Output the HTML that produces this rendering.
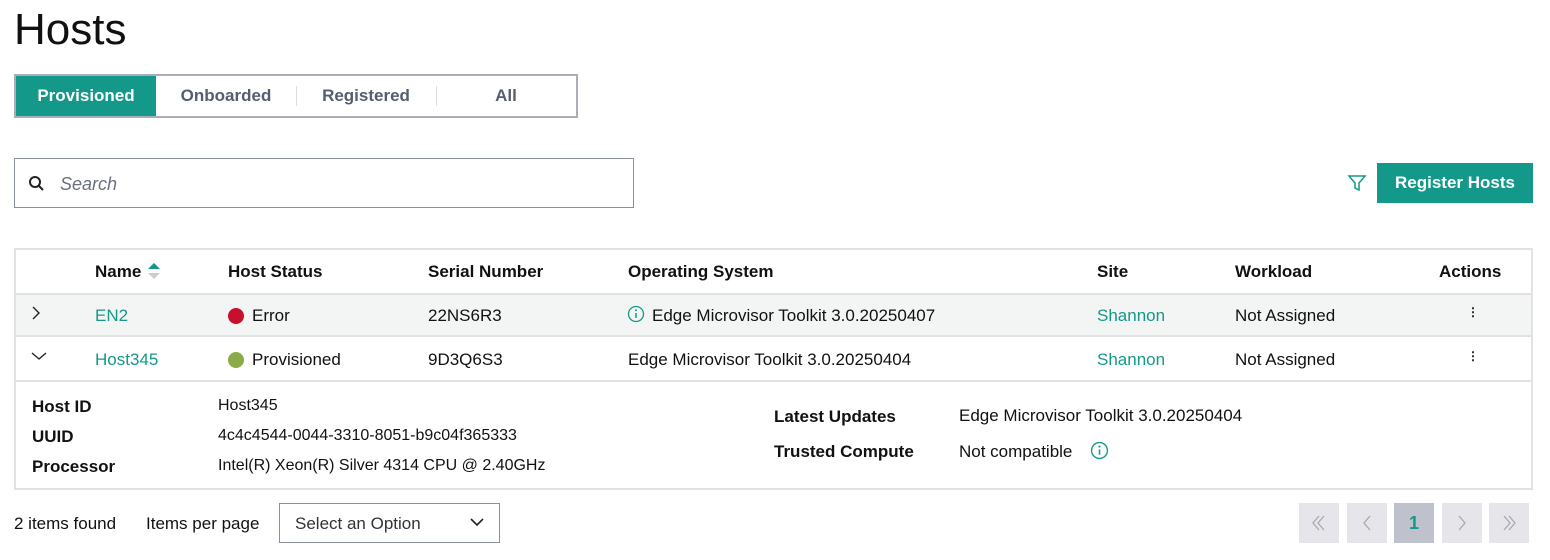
<!DOCTYPE html>
<html><head><style>
*{box-sizing:border-box;margin:0;padding:0}
body{width:1550px;height:560px;background:#fff;font-family:"Liberation Sans",sans-serif;color:#111;position:relative;overflow:hidden;font-size:17px}
.a{position:absolute;white-space:nowrap}
.t{color:#14988a}
.b{font-weight:bold}
.g{color:#555d6e}
.p{position:absolute;top:503px;width:40px;height:40px;background:#e5e5ea}
.p svg{position:absolute;left:10px;top:10px}
</style></head><body>
<div class="a" style="left:14px;top:4px;font-size:44px;line-height:52px">Hosts</div>

<div class="a" style="left:14px;top:74px;width:564px;height:44px;border:2px solid #a9adb8"></div>
<div class="a" style="left:16px;top:76px;width:140px;height:40px;background:#14988a;color:#fff;font-weight:bold;text-align:center;line-height:40px">Provisioned</div>
<div class="a b g" style="left:156px;top:76px;width:140px;line-height:40px;text-align:center">Onboarded</div>
<div class="a" style="left:296px;top:86px;width:1px;height:20px;background:#ddd"></div>
<div class="a b g" style="left:296px;top:76px;width:140px;line-height:40px;text-align:center">Registered</div>
<div class="a" style="left:436px;top:86px;width:1px;height:20px;background:#ddd"></div>
<div class="a b g" style="left:436px;top:76px;width:140px;line-height:40px;text-align:center">All</div>

<div class="a" style="left:14px;top:158px;width:620px;height:50px;border:1px solid #8a8f9c"></div>
<svg class="a" style="left:28px;top:175px" width="18" height="18" viewBox="0 0 18 18"><circle cx="7" cy="7" r="5" fill="none" stroke="#222" stroke-width="2"/><line x1="11" y1="11" x2="15" y2="15" stroke="#222" stroke-width="2"/></svg>
<div class="a g" style="left:60px;top:172px;line-height:24px;font-style:italic;font-size:18px;color:#6b7080">Search</div>

<svg class="a" style="left:1347px;top:173px" width="20" height="20" viewBox="0 0 20 20"><path d="M2 3H18L12 10V17L8 15V10Z" fill="none" stroke="#14988a" stroke-width="1.5"/></svg>
<div class="a" style="left:1377px;top:163px;width:156px;height:40px;background:#14988a;color:#fff;font-weight:bold;text-align:center;line-height:40px">Register Hosts</div>

<div class="a" style="left:14px;top:248px;width:1519px;height:242px;border:2px solid #e2e2e2"></div>
<div class="a" style="left:16px;top:293px;width:1515px;height:44px;background:#f3f4f4;border-top:2px solid #e2e2e2;border-bottom:2px solid #e2e2e2"></div>
<div class="a" style="left:16px;top:380px;width:1515px;height:2px;background:#e2e2e2"></div>

<div class="a b" style="left:95px;top:261px;line-height:22px">Name</div>
<svg class="a" style="left:146px;top:261px" width="16" height="20" viewBox="0 0 16 20"><path d="M2 8L8 2L14 8Z" fill="#14988a"/><path d="M2 12L8 18L14 12Z" fill="#ccc"/></svg>
<div class="a b" style="left:228px;top:261px;line-height:22px">Host Status</div>
<div class="a b" style="left:428px;top:261px;line-height:22px">Serial Number</div>
<div class="a b" style="left:628px;top:261px;line-height:22px">Operating System</div>
<div class="a b" style="left:1097px;top:261px;line-height:22px">Site</div>
<div class="a b" style="left:1235px;top:261px;line-height:22px">Workload</div>
<div class="a b" style="left:1439px;top:261px;line-height:22px">Actions</div>

<svg class="a" style="left:30px;top:306px" width="12" height="14" viewBox="0 0 12 14"><path d="M3 1L9 7L3 13" fill="none" stroke="#222" stroke-width="1.4"/></svg>
<div class="a t" style="left:95px;top:305px;line-height:22px">EN2</div>
<div class="a" style="left:228px;top:308px;width:16px;height:16px;border-radius:50%;background:#c8102e"></div>
<div class="a" style="left:252px;top:305px;line-height:22px">Error</div>
<div class="a" style="left:428px;top:305px;line-height:22px">22NS6R3</div>
<svg class="a" style="left:627px;top:305px" width="18" height="18" viewBox="0 0 18 18"><circle cx="9" cy="9" r="7.5" fill="none" stroke="#14988a" stroke-width="1.3"/><line x1="9" y1="8" x2="9" y2="13" stroke="#14988a" stroke-width="1.5"/><circle cx="9" cy="5.3" r="1" fill="#14988a"/></svg>
<div class="a" style="left:652px;top:305px;line-height:22px">Edge Microvisor Toolkit 3.0.20250407</div>
<div class="a t" style="left:1097px;top:305px;line-height:22px">Shannon</div>
<div class="a" style="left:1235px;top:305px;line-height:22px">Not Assigned</div>
<div class="a" style="left:1467px;top:304px;line-height:16px;font-size:12px;font-weight:bold">⋮</div>

<svg class="a" style="left:30px;top:350px" width="18" height="12" viewBox="0 0 18 12"><path d="M2 3L9 9L16 3" fill="none" stroke="#222" stroke-width="1.4"/></svg>
<div class="a t" style="left:95px;top:349px;line-height:22px">Host345</div>
<div class="a" style="left:228px;top:352px;width:16px;height:16px;border-radius:50%;background:#8aab47"></div>
<div class="a" style="left:252px;top:349px;line-height:22px">Provisioned</div>
<div class="a" style="left:428px;top:349px;line-height:22px">9D3Q6S3</div>
<div class="a" style="left:628px;top:349px;line-height:22px">Edge Microvisor Toolkit 3.0.20250404</div>
<div class="a t" style="left:1097px;top:349px;line-height:22px">Shannon</div>
<div class="a" style="left:1235px;top:349px;line-height:22px">Not Assigned</div>
<div class="a" style="left:1467px;top:348px;line-height:16px;font-size:12px;font-weight:bold">⋮</div>

<div class="a b" style="left:32px;top:396px;line-height:22px">Host ID</div>
<div class="a b" style="left:32px;top:426px;line-height:22px">UUID</div>
<div class="a b" style="left:32px;top:456px;line-height:22px">Processor</div>
<div class="a" style="left:218px;top:395px;line-height:22px;font-size:16px">Host345</div>
<div class="a" style="left:218px;top:425px;line-height:22px;font-size:16px">4c4c4544-0044-3310-8051-b9c04f365333</div>
<div class="a" style="left:218px;top:455px;line-height:22px;font-size:16px">Intel(R) Xeon(R) Silver 4314 CPU @ 2.40GHz</div>
<div class="a b" style="left:774px;top:406px;line-height:22px">Latest Updates</div>
<div class="a b" style="left:774px;top:441px;line-height:22px">Trusted Compute</div>
<div class="a" style="left:959px;top:405px;line-height:22px">Edge Microvisor Toolkit 3.0.20250404</div>
<div class="a" style="left:959px;top:441px;line-height:22px">Not compatible</div>
<svg class="a" style="left:1090px;top:441px" width="19" height="19" viewBox="0 0 18 18"><circle cx="9" cy="9" r="7.5" fill="none" stroke="#14988a" stroke-width="1.3"/><line x1="9" y1="8" x2="9" y2="13" stroke="#14988a" stroke-width="1.5"/><circle cx="9" cy="5.3" r="1" fill="#14988a"/></svg>

<div class="a" style="left:14px;top:513px;line-height:22px">2 items found</div>
<div class="a" style="left:146px;top:513px;line-height:22px">Items per page</div>
<div class="a" style="left:279px;top:503px;width:221px;height:40px;border:1px solid #8a8f9c"></div>
<div class="a" style="left:295px;top:513px;line-height:22px;color:#333">Select an Option</div>
<svg class="a" style="left:469px;top:516px" width="16" height="12" viewBox="0 0 16 12"><path d="M2 3L8 9L14 3" fill="none" stroke="#222" stroke-width="1.6"/></svg>

<div class="p" style="left:1299px"><svg width="20" height="20" viewBox="0 0 20 20"><path d="M10 3L4 10L10 17M15 3L9 10L15 17" fill="none" stroke="#a6a8b4" stroke-width="1.3"/></svg></div>
<div class="p" style="left:1347px"><svg width="20" height="20" viewBox="0 0 20 20"><path d="M13 3L7 10L13 17" fill="none" stroke="#a6a8b4" stroke-width="1.3"/></svg></div>
<div class="a" style="left:1394px;top:503px;width:40px;height:40px;background:#bfc1cc;color:#14988a;text-align:center;line-height:40px;font-weight:bold;font-size:18px">1</div>
<div class="p" style="left:1442px"><svg width="20" height="20" viewBox="0 0 20 20"><path d="M7 3L13 10L7 17" fill="none" stroke="#a6a8b4" stroke-width="1.3"/></svg></div>
<div class="p" style="left:1489px"><svg width="20" height="20" viewBox="0 0 20 20"><path d="M5 3L11 10L5 17M10 3L16 10L10 17" fill="none" stroke="#a6a8b4" stroke-width="1.3"/></svg></div>
</body></html>
